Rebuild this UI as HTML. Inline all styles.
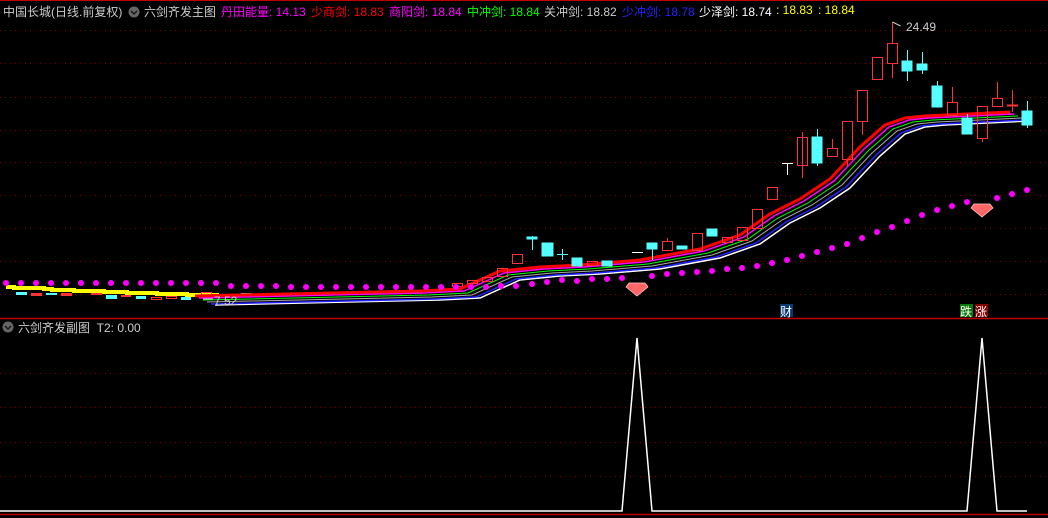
<!DOCTYPE html>
<html><head><meta charset="utf-8"><style>
html,body{margin:0;padding:0;background:#000;width:1048px;height:518px;overflow:hidden}
.t{position:absolute;font:12px "Liberation Sans","Noto Sans CJK SC",sans-serif;white-space:nowrap;top:3px}
</style></head><body>
<svg width="1048" height="518" style="position:absolute;left:0;top:0" xmlns="http://www.w3.org/2000/svg">
<g stroke="#800000" stroke-dasharray="1 4">
<line x1="0" x2="1048" y1="30.5" y2="30.5"/><line x1="0" x2="1048" y1="63.5" y2="63.5"/><line x1="0" x2="1048" y1="97.5" y2="97.5"/><line x1="0" x2="1048" y1="130.5" y2="130.5"/><line x1="0" x2="1048" y1="162.5" y2="162.5"/><line x1="0" x2="1048" y1="195.5" y2="195.5"/><line x1="0" x2="1048" y1="228.5" y2="228.5"/><line x1="0" x2="1048" y1="261.5" y2="261.5"/><line x1="0" x2="1048" y1="294.5" y2="294.5"/>
<line x1="0" x2="1048" y1="373.5" y2="373.5"/><line x1="0" x2="1048" y1="407.5" y2="407.5"/><line x1="0" x2="1048" y1="442.5" y2="442.5"/><line x1="0" x2="1048" y1="476.5" y2="476.5"/>
</g>
<line x1="0" x2="1048" y1="0.5" y2="0.5" stroke="#c00000"/>
<line x1="0" x2="1048" y1="318.5" y2="318.5" stroke="#c00000" stroke-width="1.5"/>
<line x1="0" x2="1048" y1="514.5" y2="514.5" stroke="#c00000" stroke-width="1.5"/>
<!-- yellow band left -->
<path d="M6,287 H14 V288 H44 V289 H52 V290 H74 V291 H104 V292 H127 V293 H157 V294 H187 V295 H217 V297" stroke="#ff0" stroke-width="4" fill="none"/>
<!-- small left candles -->
<g fill="#5ff">
<rect x="16" y="292" width="11" height="3"/><rect x="46" y="293" width="11" height="2"/><rect x="106" y="295" width="11" height="4"/><rect x="136" y="296" width="10" height="3"/><rect x="181" y="297" width="10" height="3"/><rect x="316" y="292" width="12" height="2"/><rect x="241" y="293" width="11" height="2"/></g>
<g fill="#f33"><rect x="31" y="293" width="11" height="3"/><rect x="61" y="293" width="11" height="3"/><rect x="91" y="293" width="11" height="2"/><rect x="121" y="295" width="10" height="2"/></g>
<g fill="none" stroke="#f33"><rect x="151.5" y="297.5" width="10" height="2"/><rect x="166.5" y="296.5" width="10" height="2"/><rect x="201.5" y="292.5" width="10" height="3"/></g>
<!-- MA lines -->
<g fill="none">
<path d="M215,297 L440,292 L480,290 L520,272 L560,268 L600,266 L660,261 L720,250 L760,236 L790,215 L820,200 L850,180 L880,148 L905,126 L925,119 L945,117 L1030,113" stroke="#fff" stroke-width="1.5" transform="translate(0,8)"/>
<path d="M215,297 L440,292 L480,290 L520,272 L560,268 L600,266 L660,261 L720,250 L760,236 L790,215 L820,200 L850,180 L880,148 L905,126 L925,119 L945,117 L1030,113" stroke="#22f" stroke-width="1.5" transform="translate(-4,7)"/>
<path d="M215,297 L440,292 L480,290 L520,272 L560,268 L600,266 L660,261 L720,250 L760,236 L790,215 L820,200 L850,180 L880,148 L905,126 L925,119 L945,117 L1030,113" stroke="#aaa" stroke-width="1" transform="translate(-8,5)"/>
<path d="M215,297 L440,292 L480,290 L520,272 L560,268 L600,266 L660,261 L720,250 L760,236 L790,215 L820,200 L850,180 L880,148 L905,126 L925,119 L945,117 L1030,113" stroke="#0f0" stroke-width="1" transform="translate(-12,3)"/>
<path d="M215,297 L440,292 L480,290 L520,272 L560,268 L600,266 L660,261 L720,250 L760,236 L790,215 L820,200 L850,180 L880,148 L905,126 L925,119 L945,117 L1030,113" stroke="#f0f" stroke-width="1.5" transform="translate(-16,1)"/>
<path d="M215,297 L440,292 L480,290 L520,272 L560,268 L600,266 L660,261 L720,250 L760,236 L790,215 L820,200 L850,180 L880,148 L905,126 L925,119 L945,117 L1030,113" stroke="#f00" stroke-width="3" transform="translate(-20,-1)"/>
</g>
<!-- candles mid/right -->
<g stroke="#f33" fill="none">
<rect x="452.5" y="283.5" width="10" height="3"/><rect x="467.5" y="280.5" width="10" height="3"/><rect x="482.5" y="277.5" width="10" height="4"/><rect x="497.5" y="268.5" width="10" height="8"/><rect x="512.5" y="254.5" width="10" height="9"/><rect x="587.5" y="261.5" width="10" height="4"/>
<rect x="662.5" y="241.5" width="10" height="9"/><line x1="667.5" x2="667.5" y1="238" y2="242"/>
<rect x="692.5" y="233.5" width="10" height="17"/>
<rect x="722.5" y="237.5" width="10" height="5"/><rect x="737.5" y="227.5" width="10" height="13"/>
<rect x="752.5" y="209.5" width="10" height="19"/><rect x="767.5" y="187.5" width="10" height="12"/>
<rect x="797.5" y="137.5" width="10" height="28"/><line x1="802.5" x2="802.5" y1="132" y2="178"/>
<rect x="827.5" y="148.5" width="10" height="8"/><line x1="832.5" x2="832.5" y1="139" y2="149"/>
<rect x="842.5" y="121.5" width="10" height="38"/><line x1="847.5" x2="847.5" y1="160" y2="167"/>
<rect x="857.5" y="90.5" width="10" height="31"/><line x1="862.5" x2="862.5" y1="121" y2="135"/>
<rect x="872.5" y="57.5" width="10" height="22"/>
<rect x="887.5" y="43.5" width="10" height="20"/><line x1="892.5" x2="892.5" y1="22" y2="44"/><line x1="892.5" x2="892.5" y1="63" y2="78"/>
<rect x="947.5" y="102.5" width="10" height="13"/><line x1="952.5" x2="952.5" y1="87" y2="103"/>
<rect x="977.5" y="106.5" width="10" height="32"/><line x1="982.5" x2="982.5" y1="138" y2="142"/>
<rect x="992.5" y="98.5" width="10" height="8"/><line x1="997.5" x2="997.5" y1="82" y2="99"/>
<line x1="1007" x2="1018" y1="105.5" y2="105.5" stroke-width="2"/><line x1="1012.5" x2="1012.5" y1="90" y2="112"/>
</g>
<g fill="#5ff" stroke="#5ff">
<rect x="527" y="237" width="10" height="2"/><line x1="532.5" x2="532.5" y1="236" y2="250"/>
<rect x="542" y="243" width="11" height="13"/>
<line x1="557" x2="568" y1="254.5" y2="254.5"/><line x1="562.5" x2="562.5" y1="249" y2="260"/>
<rect x="572" y="258" width="10" height="8"/><rect x="602" y="261" width="10" height="5"/>
<rect x="647" y="243" width="10" height="6"/><line x1="652.5" x2="652.5" y1="249" y2="260"/>
<rect x="677" y="246" width="10" height="3"/><rect x="707" y="229" width="10" height="7"/>
<rect x="812" y="137" width="10" height="26"/><line x1="817.5" x2="817.5" y1="129" y2="166"/>
<rect x="902" y="61" width="10" height="10"/><line x1="907.5" x2="907.5" y1="50" y2="81"/>
<rect x="917" y="64" width="10" height="6"/><line x1="922.5" x2="922.5" y1="52" y2="74"/>
<rect x="932" y="86" width="10" height="21"/><line x1="937.5" x2="937.5" y1="81" y2="86"/>
<rect x="962" y="118" width="10" height="16"/><line x1="967.5" x2="967.5" y1="114" y2="118"/>
<rect x="1022" y="111" width="10" height="14"/><line x1="1027.5" x2="1027.5" y1="101" y2="128"/>
</g>
<g stroke="#fff"><line x1="632" x2="643" y1="252.5" y2="252.5"/><line x1="782" x2="793" y1="163.5" y2="163.5"/><line x1="787.5" x2="787.5" y1="163" y2="175"/></g>
<!-- magenta dots -->
<g fill="#f0f">
<circle cx="6" cy="283" r="3"/><circle cx="21" cy="283" r="3"/><circle cx="36" cy="283" r="3"/><circle cx="51" cy="283" r="3"/><circle cx="66" cy="283" r="3"/><circle cx="81" cy="283" r="3"/><circle cx="96" cy="283" r="3"/><circle cx="111" cy="283" r="3"/><circle cx="126" cy="283" r="3"/><circle cx="141" cy="283" r="3"/><circle cx="156" cy="283" r="3"/><circle cx="171" cy="283" r="3"/><circle cx="186" cy="283" r="3"/><circle cx="201" cy="283" r="3"/><circle cx="216" cy="283" r="3"/><circle cx="231" cy="286" r="3"/><circle cx="246" cy="286" r="3"/><circle cx="261" cy="286" r="3"/><circle cx="276" cy="286" r="3"/><circle cx="291" cy="287" r="3"/><circle cx="306" cy="287" r="3"/><circle cx="321" cy="287" r="3"/><circle cx="336" cy="287" r="3"/><circle cx="351" cy="287" r="3"/><circle cx="366" cy="287" r="3"/><circle cx="381" cy="287" r="3"/><circle cx="396" cy="287" r="3"/><circle cx="411" cy="287" r="3"/><circle cx="426" cy="287" r="3"/><circle cx="441" cy="287" r="3"/><circle cx="456" cy="287" r="3"/><circle cx="471" cy="287" r="3"/><circle cx="486" cy="287" r="3"/><circle cx="501" cy="286" r="3"/><circle cx="516" cy="286" r="3"/><circle cx="532" cy="284" r="3"/><circle cx="547" cy="282" r="3"/><circle cx="562" cy="280" r="3"/><circle cx="577" cy="281" r="3"/><circle cx="592" cy="279" r="3"/><circle cx="607" cy="279" r="3"/><circle cx="622" cy="278" r="3"/><circle cx="652" cy="276" r="3"/><circle cx="667" cy="274" r="3"/><circle cx="682" cy="273" r="3"/><circle cx="697" cy="272" r="3"/><circle cx="712" cy="271" r="3"/><circle cx="727" cy="269" r="3"/><circle cx="742" cy="268" r="3"/><circle cx="757" cy="266" r="3"/><circle cx="772" cy="263" r="3"/><circle cx="787" cy="260" r="3"/><circle cx="802" cy="256" r="3"/><circle cx="817" cy="252" r="3"/><circle cx="832" cy="248" r="3"/><circle cx="847" cy="244" r="3"/><circle cx="862" cy="238" r="3"/><circle cx="877" cy="232" r="3"/><circle cx="892" cy="227" r="3"/><circle cx="907" cy="221" r="3"/><circle cx="922" cy="215" r="3"/><circle cx="937" cy="210" r="3"/><circle cx="952" cy="206" r="3"/><circle cx="967" cy="202" r="3"/><circle cx="997" cy="198" r="3"/><circle cx="1012" cy="194" r="3"/><circle cx="1027" cy="190" r="3"/>
</g>
<!-- gems -->
<path d="M629,283 h16 l3,4 -11,9 -11,-9z" fill="#f66" stroke="#fcc" stroke-width="0.7"/>
<path d="M974,204 h16 l3,4 -11,9 -11,-9z" fill="#f66" stroke="#fcc" stroke-width="0.7"/>
<!-- markers -->
<path d="M892.5,22 l8,4" stroke="#ccc"/>
<path d="M203,299 h10" stroke="#ccc"/>
<!-- subchart -->
<path d="M0,511 H622 L637,338 L652,511 H967 L982,338 L997,511 H1027" stroke="#fff" stroke-width="1.5" fill="none"/>
<!-- icons -->
<circle cx="134" cy="12" r="5.5" fill="#666"/><path d="M131,11 l3,3 3,-3" stroke="#111" fill="none" stroke-width="1.3"/>
<circle cx="8" cy="327" r="5.5" fill="#666"/><path d="M5,326 l3,3 3,-3" stroke="#111" fill="none" stroke-width="1.3"/>
<rect x="780" y="304" width="13" height="13" fill="#0a3a70"/>
<rect x="960" y="304" width="13" height="13" fill="#0a7a0a"/>
<rect x="975" y="304" width="13" height="13" fill="#800"/>
</svg>
<div class="t" style="left:3px;color:#ccc">中国长城(日线.前复权)</div>
<div class="t" style="left:144px;color:#ccc">六剑齐发主图</div>
<div class="t" style="left:221px;color:#f0f">丹田能量: 14.13</div>
<div class="t" style="left:311px;color:#f00">少商剑: 18.83</div>
<div class="t" style="left:389px;color:#f0f">商阳剑: 18.84</div>
<div class="t" style="left:467px;color:#0f0">中冲剑: 18.84</div>
<div class="t" style="left:544px;color:#ccc">关冲剑: 18.82</div>
<div class="t" style="left:622px;color:#22f">少冲剑: 18.78</div>
<div class="t" style="left:699px;color:#fff">少泽剑: 18.74</div>
<div class="t" style="left:776px;color:#ff0">: 18.83</div>
<div class="t" style="left:818px;color:#ff0">: 18.84</div>
<div class="t" style="left:906px;top:20px;color:#ccc">24.49</div>
<div class="t" style="left:214px;top:294px;color:#ccc">7.52</div>
<div class="t" style="left:18px;top:319px;color:#ccc">六剑齐发副图 &nbsp;T2: 0.00</div>
<div class="t" style="left:780px;top:303px;color:#fff;font-size:12px">财</div>
<div class="t" style="left:960px;top:303px;color:#fff">跌</div>
<div class="t" style="left:975px;top:303px;color:#fff">涨</div>
</body></html>
